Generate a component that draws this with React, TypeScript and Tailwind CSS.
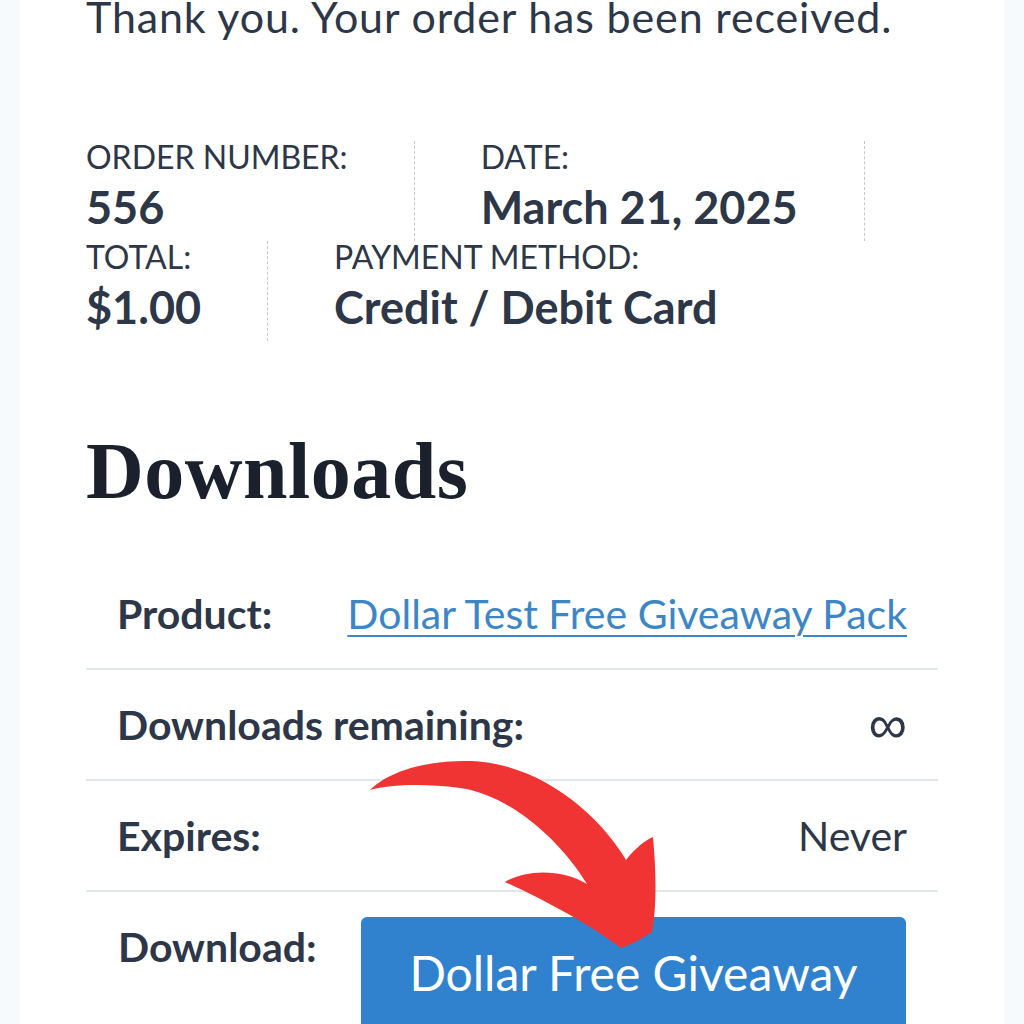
const orderItems = [
  { label: 'Order number:', value: '556' },
  { label: 'Date:', value: 'March 21, 2025' },
  { label: 'Total:', value: '$1.00' },
  { label: 'Payment method:', value: 'Credit / Debit Card', last: true },
];

function Arrow() {
  return (
    <svg className="absolute left-0 top-0 pointer-events-none" width="1024" height="1024" viewBox="0 0 1024 1024">
      <path
        d="M370,790 C390,770 430,760 470,761 C540,763 600,815 626,860 C632,852 642,842 653,837 C656,870 657,905 652,932 C640,940 630,945 621,948 C590,925 545,900 505,882 C525,870 560,868 587,884 C560,840 510,795 460,788 C420,783 390,785 370,790 Z"
        fill="#f03434"
      />
    </svg>
  );
}

export default function App() {
  return (
    <div className="relative h-[1024px] w-full overflow-hidden bg-[#f7fafc] font-['Lato',sans-serif] text-[#2d3748]">
      <div className="mx-[20px] flow-root h-full bg-white px-[66px]">
        <p className="mt-[-9px] text-[43px] leading-[1.2] tracking-[0.85px]">Thank you. Your order has been received.</p>

        <ul className="mt-[98px] flex flex-wrap">
          {orderItems.map((item) => (
            <li
              key={item.label}
              className={
                item.last
                  ? 'h-[100px]'
                  : 'mr-[66px] h-[100px] border-r border-dashed border-[#c4c9d0] pr-[66px]'
              }
            >
              <span className="block text-[32px] uppercase leading-[32px]">{item.label}</span>
              <strong className="block text-[45px] font-bold leading-[68px]">{item.value}</strong>
            </li>
          ))}
        </ul>

        <h2 className="mt-[90px] font-['Liberation_Serif',serif] text-[80px] font-bold leading-none tracking-[0.5px] text-[#1a202c]">
          Downloads
        </h2>

        <div className="mt-[48px] text-[41px] leading-[1.2]">
          <div className="flex h-[111px] items-center justify-between border-b-2 border-[#e2e5e9] px-[31px]">
            <span className="font-bold">Product:</span>
            <a href="#" className="text-[#3d86c6] underline decoration-2 underline-offset-[6px]">
              Dollar Test Free Giveaway Pack
            </a>
          </div>
          <div className="flex h-[111px] items-center justify-between border-b-2 border-[#e2e5e9] px-[31px]">
            <span className="font-bold">Downloads remaining:</span>
            <span className="font-['Liberation_Sans',sans-serif] text-[54px] font-light leading-none">∞</span>
          </div>
          <div className="flex h-[111px] items-center justify-between border-b-2 border-[#e2e5e9] px-[31px]">
            <span className="font-bold">Expires:</span>
            <span>Never</span>
          </div>
          <div className="flex items-start justify-between px-[32px] pt-[25px]">
            <span className="mt-[5px] font-bold">Download:</span>
            <button className="h-[140px] w-[545px] rounded-[6px] bg-[#3182ce] pb-[50px] pt-[22px] text-[48px] text-white">
              Dollar Free Giveaway
            </button>
          </div>
        </div>
      </div>
      <Arrow />
    </div>
  );
}
